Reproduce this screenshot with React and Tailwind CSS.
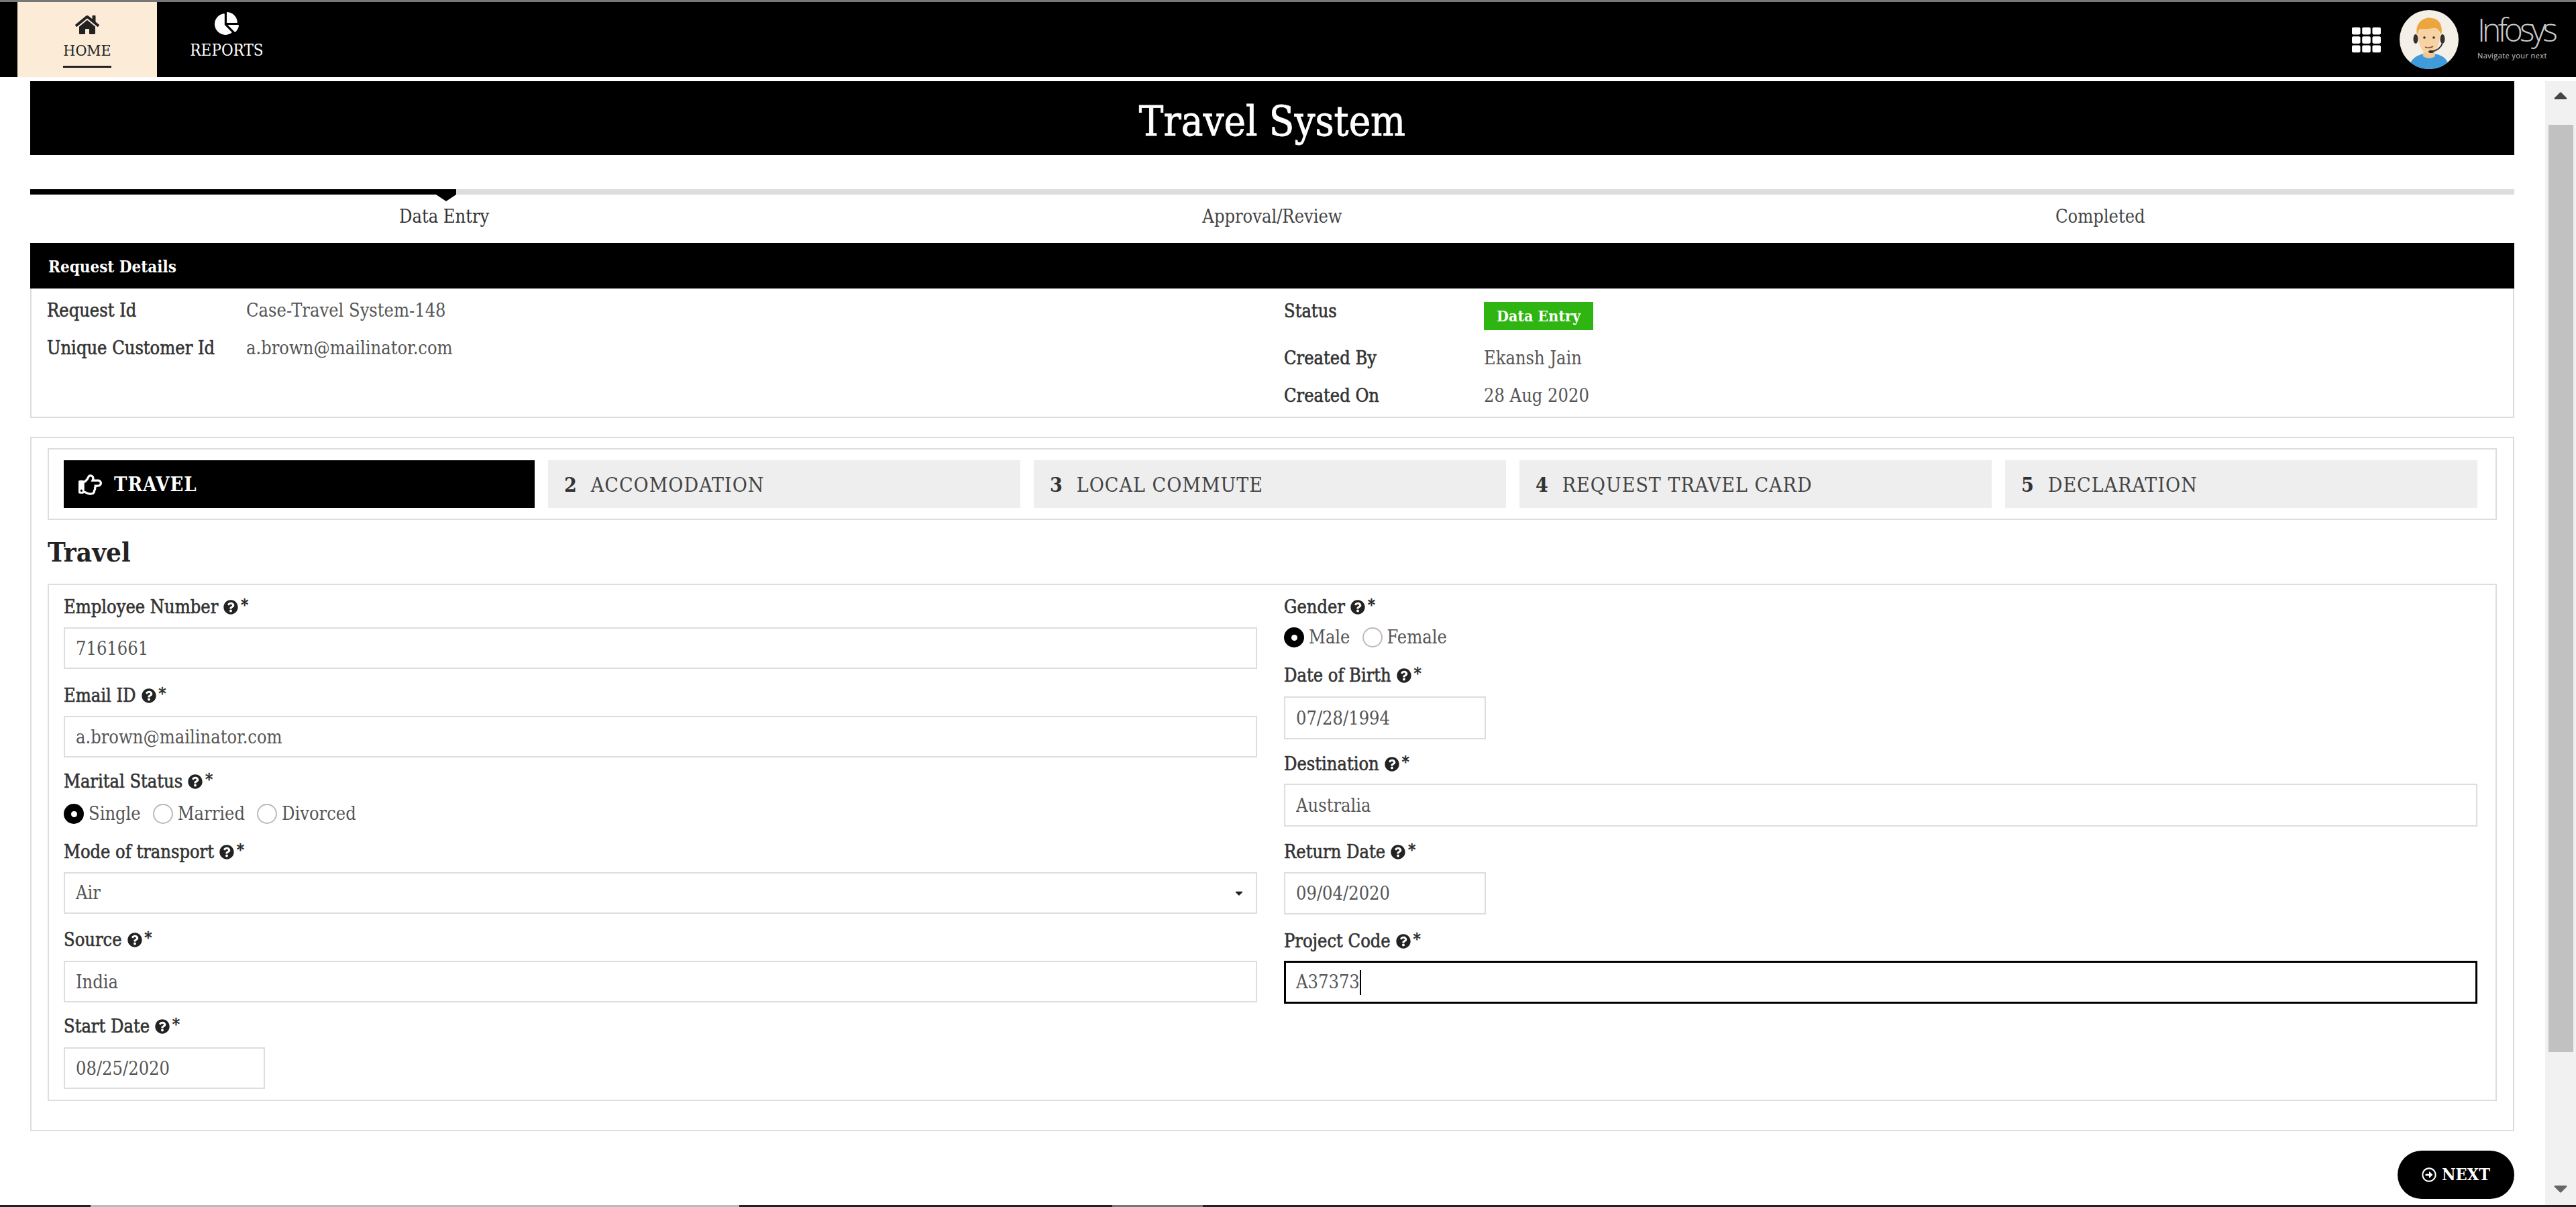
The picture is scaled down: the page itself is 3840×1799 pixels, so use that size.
import { FaHome, FaChartPie, FaTh, FaRegHandPointRight, FaQuestionCircle, FaRegArrowAltCircleRight, FaCaretDown, FaCaretUp } from "react-icons/fa";

const tabs = [
  { n: "2", label: "ACCOMODATION" },
  { n: "3", label: "LOCAL COMMUTE" },
  { n: "4", label: "REQUEST TRAVEL CARD" },
  { n: "5", label: "DECLARATION" },
];

// the slab face in the picture is a medium weight, the installed one only has regular and bold
const medium = "text-[27px] text-[#333] [-webkit-text-stroke:0.6px_#333]";

const Label = ({ text, className = "" }) => (
  <div className={`flex h-[30px] items-center ${medium} ${className}`}>
    <span>{text}</span>
    <FaQuestionCircle className="ml-[8px] text-[22px] text-[#222]" />
    <span className="ml-[4px] -mt-[6px] text-[24px] text-[#222]">*</span>
  </div>
);

const Input = ({ value, className = "h-[62px] w-full" }) => (
  <input
    readOnly
    value={value}
    className={`block border-2 border-[#ddd] bg-white px-[16px] text-[27px] text-[#555] outline-none ${className}`}
  />
);

const Radio = ({ label, checked }) => (
  <div className="flex h-[30px] items-center">
    {checked ? (
      <span className="flex h-[30px] w-[30px] items-center justify-center rounded-full bg-black">
        <span className="h-[9px] w-[9px] rounded-full bg-white" />
      </span>
    ) : (
      <span className="h-[30px] w-[30px] rounded-full border-2 border-[#bbb] bg-white" />
    )}
    <span className="ml-[7px] text-[27px] leading-[30px] text-[#555]">{label}</span>
  </div>
);

const Avatar = () => (
  <svg viewBox="0 0 90 90" className="h-[90px] w-[90px]">
    <defs>
      <clipPath id="av">
        <circle cx="45" cy="45" r="44" />
      </clipPath>
    </defs>
    <g clipPath="url(#av)">
      <rect width="90" height="90" fill="#f4f0e8" />
      <path d="M14 92 C16 72 28 68 38 66 L52 66 C64 68 74 72 76 92 Z" fill="#3f9bdc" />
      <path d="M37 56 L53 56 L54 70 Q45 76 36 70 Z" fill="#f0c795" />
      <path d="M29 38 C29 22 61 22 61 38 C61 56 54 66 45 66 C36 66 29 56 29 38 Z" fill="#f6d2a4" />
      <path d="M27 38 C23 16 42 11 48 13 C62 13 66 28 63 38 C60 30 56 27 50 28 C42 30 34 28 31 30 C29 32 29 36 27 38 Z" fill="#eda63e" />
      <ellipse cx="25" cy="44" rx="3.5" ry="7" fill="#35302e" />
      <ellipse cx="65" cy="44" rx="3.5" ry="7" fill="#35302e" />
      <circle cx="38" cy="42" r="1.8" fill="#3a2a20" />
      <circle cx="52" cy="42" r="1.8" fill="#3a2a20" />
      <path d="M39 56 Q45 59 51 55" fill="none" stroke="#8a4b32" strokeWidth="1.6" />
      <path d="M65 50 Q62 60 49 63" fill="none" stroke="#35302e" strokeWidth="2" />
      <ellipse cx="48" cy="63" rx="4" ry="2" fill="#35302e" />
    </g>
  </svg>
);

export default function App() {
  return (
    <div className="flex h-[1799px] flex-col overflow-hidden bg-white font-['DejaVu_Serif_Condensed','DejaVu_Serif',serif]">
      <div className="h-[3px] bg-[#777]" />

      {/* Top nav */}
      <nav className="flex h-[112px] shrink-0 items-stretch bg-black pl-[26px] pr-[30px]">
        <a className="flex w-[208px] flex-col items-center bg-[#fbebd7] pt-[16px] text-[#222]">
          <FaHome className="text-[36px]" />
          <span className="mt-[6px] border-b-[3px] border-[#222] pb-[9px] text-[23px] leading-[28px]">HOME</span>
        </a>
        <a className="flex w-[208px] flex-col items-center pt-[14px] text-white">
          <FaChartPie className="text-[36px]" />
          <span className="mt-[8px] text-[24px] leading-[28px]">REPORTS</span>
        </a>
        <div className="ml-auto flex items-center">
          <FaTh className="text-[43px] text-white" />
          <div className="ml-[27px]">
            <Avatar />
          </div>
          <div className="-mt-[4px] ml-[27px] w-[117px] font-['Open_Sans',sans-serif] text-[#c9c9c9]">
            <div className="text-[48px] font-light leading-[40px] tracking-[-5px]">Infosys</div>
            <div className="mt-[12px] whitespace-nowrap text-[11px] leading-[14px] tracking-[0.4px]">Navigate your next</div>
          </div>
        </div>
      </nav>

      <div className="flex min-h-0 flex-1 pt-[6px]">
        <main className="min-w-0 flex-1 overflow-hidden pl-[45px] pr-[46px]">
          <div className="flex h-[110px] items-center justify-center bg-black pt-[10px] text-[61px] text-white [-webkit-text-stroke:0.8px_#fff]">Travel System</div>

          {/* Stepper */}
          <div className="relative mt-[51px] h-[8px] bg-[#ddd]">
            <div className="h-full w-[635px] bg-black" />
            <div className="absolute left-[605px] top-[8px] h-0 w-0 border-x-[15px] border-t-[10px] border-x-transparent border-t-black" />
          </div>
          <div className="mt-[19px] grid grid-cols-3 text-center text-[27px] leading-[28px] text-[#444]">
            <div className="text-[#333]">Data Entry</div>
            <div>Approval/Review</div>
            <div>Completed</div>
          </div>

          {/* Request details */}
          <section className="mt-[25px] h-[261px] border-2 border-t-0 border-[#ddd]">
            <div className="-mx-[2px] flex h-[68px] items-center bg-black pl-[27px] pt-[3px] text-[24px] font-bold text-white">Request Details</div>
            <div className="grid grid-cols-[1844px_1fr] pl-[23px] text-[27px] leading-[28px] text-[#555]">
              <div className="pt-[19px]">
                <div className="flex">
                  <span className={`w-[297px] ${medium}`}>Request Id</span>
                  <span>Case-Travel System-148</span>
                </div>
                <div className="mt-[28px] flex">
                  <span className={`w-[297px] ${medium}`}>Unique Customer Id</span>
                  <span>a.brown@mailinator.com</span>
                </div>
              </div>
              <div className="pt-[20px]">
                <div className="flex h-[70px] items-start">
                  <span className={`w-[298px] ${medium}`}>Status</span>
                  <span className="flex h-[42px] w-[163px] items-center justify-center bg-[#2fb511] text-[23px] font-bold text-white">Data Entry</span>
                </div>
                <div className="flex h-[56px]">
                  <span className={`w-[298px] ${medium}`}>Created By</span>
                  <span>Ekansh Jain</span>
                </div>
                <div className="flex">
                  <span className={`w-[298px] ${medium}`}>Created On</span>
                  <span>28 Aug 2020</span>
                </div>
              </div>
            </div>
          </section>

          {/* Travel card */}
          <section className="mt-[28px] h-[1035px] border-2 border-[#ddd] px-[24px] pt-[15px]">
            <div className="flex gap-[20px] border-2 border-[#ddd] pb-[16px] pl-[22px] pr-[27px] pt-[16px]">
              <div className="flex h-[71px] flex-1 items-center bg-black pl-[22px] pt-[2px] text-[29px] font-bold tracking-[1px] text-white">
                <FaRegHandPointRight className="mr-[18px] text-[35px]" />
                TRAVEL
              </div>
              {tabs.map((t) => (
                <div key={t.n} className="flex h-[71px] flex-1 items-center bg-[#eee] pl-[24px] pt-[2px] text-[30px] tracking-[1px] text-[#444]">
                  <span className="mr-[20px] font-bold text-[#333]">{t.n}</span>
                  {t.label}
                </div>
              ))}
            </div>

            <h2 className="flex h-[95px] items-center text-[40px] font-bold text-[#222]">Travel</h2>

            <div className="grid h-[771px] grid-cols-2 gap-x-[40px] border-2 border-[#ddd] pl-[22px] pr-[27px] pt-[18px]">
              <div>
                <Label text="Employee Number" />
                <Input value="7161661" className="mt-[15px] h-[62px] w-full" />
                <Label text="Email ID" className="mt-[25px]" />
                <Input value="a.brown@mailinator.com" className="mt-[15px] h-[62px] w-full" />
                <Label text="Marital Status" className="mt-[21px]" />
                <div className="mt-[18px] flex gap-[18px]">
                  <Radio label="Single" checked />
                  <Radio label="Married" />
                  <Radio label="Divorced" />
                </div>
                <Label text="Mode of transport" className="mt-[27px]" />
                <div className="mt-[15px] flex h-[62px] items-center justify-between border-2 border-[#ddd] pl-[16px] pr-[16px] text-[27px] text-[#555]">
                  <span>Air</span>
                  <FaCaretDown className="text-[18px] text-[#222]" />
                </div>
                <Label text="Source" className="mt-[24px]" />
                <Input value="India" className="mt-[16px] h-[62px] w-full" />
                <Label text="Start Date" className="mt-[21px]" />
                <Input value="08/25/2020" className="mt-[16px] h-[62px] w-[300px]" />
              </div>
              <div>
                <Label text="Gender" />
                <div className="mt-[15px] flex gap-[18px]">
                  <Radio label="Male" checked />
                  <Radio label="Female" />
                </div>
                <Label text="Date of Birth" className="mt-[27px]" />
                <Input value="07/28/1994" className="mt-[16px] h-[64px] w-[301px]" />
                <Label text="Destination" className="mt-[22px]" />
                <Input value="Australia" className="mt-[14px] h-[64px] w-full" />
                <Label text="Return Date" className="mt-[23px]" />
                <Input value="09/04/2020" className="mt-[15px] h-[63px] w-[301px]" />
                <Label text="Project Code" className="mt-[25px]" />
                <div className="mt-[14px] flex h-[64px] items-center border-[3px] border-black px-[15px] text-[27px] text-[#555]">
                  A37373
                  <span className="h-[37px] w-[2px] bg-black" />
                </div>
              </div>
            </div>
          </section>

          <div className="mt-[29px] flex justify-end">
            <button className="flex h-[72px] w-[174px] items-center justify-center rounded-full bg-black text-[25px] font-bold text-white">
              <FaRegArrowAltCircleRight className="mr-[8px] text-[22px]" />
              NEXT
            </button>
          </div>
        </main>

        {/* Scrollbar */}
        <div className="flex w-[46px] shrink-0 flex-col items-center bg-[#f1f1f1] pt-[5px]">
          <FaCaretUp className="h-[32px] w-[32px] text-[#444]" />
          <div className="mt-[28px] h-[1382px] w-[37px] bg-[#c1c1c1]" />
          <FaCaretDown className="mt-[187px] h-[32px] w-[32px] text-[#666]" />
        </div>
      </div>

      {/* Sliver of the OS taskbar at the bottom edge */}
      <div className="flex h-[3px] shrink-0 bg-[#222] pl-[135px]">
        <div className="w-[967px] bg-[#bbb]" />
        <div className="ml-[556px] w-[135px] bg-[#777]" />
      </div>
    </div>
  );
}
